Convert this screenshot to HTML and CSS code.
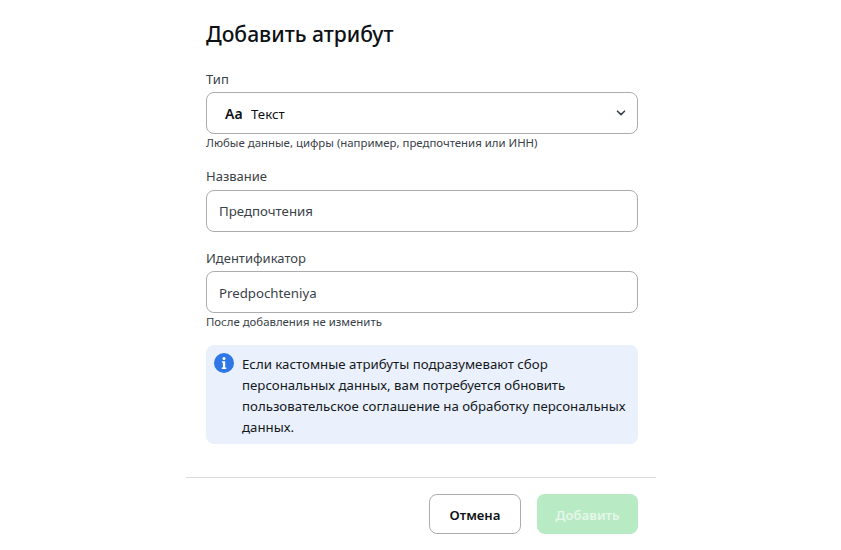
FILE: index.html
```html
<!DOCTYPE html>
<html lang="ru">
  <head>
    <meta charset="UTF-8" />
    <meta name="viewport" content="width=device-width, initial-scale=1.0" />
    <title>Добавить атрибут</title>
    <link rel="stylesheet" href="styles.css">
  </head>
  <body>
    <div class="modal">
      <div class="modal-body">
        <h2 class="modal-title">Добавить атрибут</h2>
        <div class="field field-type">
          <label class="field-label">Тип</label>
          <div class="select">
            <span class="select-icon">Aa</span>
            <span class="select-value">Текст</span>
            <svg class="select-arrow" width="10" height="6" viewBox="0 0 10 6" fill="none">
              <path d="M1.5 1.2 5 4.6 8.5 1.2" stroke="#3a4248" stroke-width="1.6" stroke-linecap="round" stroke-linejoin="round" />
            </svg>
          </div>
          <p class="field-hint">Любые данные, цифры (например, предпочтения или ИНН)</p>
        </div>
        <div class="field field-name">
          <label class="field-label">Название</label>
          <div class="input">Предпочтения</div>
        </div>
        <div class="field field-id">
          <label class="field-label">Идентификатор</label>
          <div class="input">Predpochteniya</div>
          <p class="field-hint">После добавления не изменить</p>
        </div>
        <div class="notice">
          <svg class="notice-icon" width="20" height="20" viewBox="0 0 20 20">
            <circle cx="10" cy="10" r="10" fill="#2f76e6" />
            <circle cx="10" cy="5.6" r="1.5" fill="#fff" />
            <path d="M7.9 8.2h3.3v6.2h1.1v1.5H7.8v-1.5h1.1V9.7h-1z" fill="#fff" />
          </svg>
          <p class="notice-text">Если кастомные атрибуты подразумевают сбор персональных данных, вам потребуется обновить пользовательское соглашение на обработку персональных данных.</p>
        </div>
      </div>
      <div class="modal-footer">
        <button class="btn btn-cancel">Отмена</button>
        <button class="btn btn-add">Добавить</button>
      </div>
    </div>
  </body>
</html>
```

FILE: styles.css
```css
* {
  box-sizing: border-box;
  margin: 0;
  padding: 0;
  font-family: "Noto Sans", "Open Sans", Arial, sans-serif;
}
body {
  background-color: #fff;
  color: #0d1115;
}
.modal {
  width: 470px;
  margin-left: 186px;
}
.modal-body {
  padding: 20px 18px 0 20px;
}
.modal-title {
  font-size: 21.1px;
  line-height: 28px;
  font-weight: 500;
  margin-bottom: 22px;
}
.field-label {
  display: block;
  font-size: 13px;
  line-height: 18px;
  color: #3a4248;
  margin-bottom: 4px;
}
.field-name {
  margin-top: 16px;
}
.field-name .field-label {
  margin-bottom: 5px;
}
.field-id {
  margin-top: 17px;
}
.select,
.input {
  height: 42px;
  border: 1px solid #a9adb0;
  border-radius: 8px;
  display: flex;
  align-items: center;
  font-size: 13.25px;
}
.select {
  padding: 0 11px 0 18px;
}
.input {
  padding: 0 12px;
  color: #3a4248;
}
.field-id .input {
  padding-top: 1px;
}
.select-icon {
  font-weight: 600;
  font-size: 14px;
  width: 26px;
}
.select-value {
  flex: 1;
  padding-top: 1px;
}
.select-arrow {
  margin-top: -1px;
}
.field-hint {
  font-size: 11.4px;
  line-height: 16px;
  margin-top: 1px;
  color: #3a4248;
}
.notice {
  margin-top: 15px;
  background-color: #eaf1fc;
  border-radius: 8px;
  padding: 9px 8px 6px;
  display: flex;
  gap: 8px;
  height: 99px;
}
.notice-icon {
  flex-shrink: 0;
  margin-top: -1px;
}
.notice-text {
  font-size: 13.25px;
  line-height: 21px;
  color: #15191d;
}
.modal-footer {
  margin-top: 33px;
  border-top: 1px solid #d9dbdd;
  padding: 16px 18px 0 0;
  display: flex;
  justify-content: flex-end;
  gap: 16px;
}
.btn {
  height: 40px;
  border-radius: 8px;
  font-size: 13.2px;
  font-weight: 600;
  padding-top: 1px;
}
.btn-cancel {
  width: 92px;
  background-color: #fff;
  border: 1px solid #a9adb0;
  color: #0d1115;
}
.btn-add {
  width: 101px;
  background-color: #b8eac4;
  border: none;
  color: #e6f7ea;
}
```
